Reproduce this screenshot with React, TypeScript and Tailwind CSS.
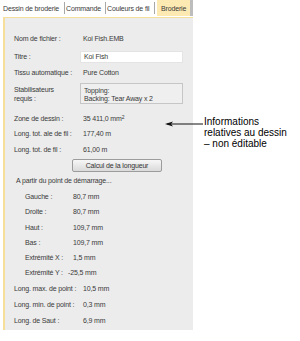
import React from "react";

const font = { fontFamily: '"Liberation Sans", Arial, sans-serif' };

function Row({
  label,
  value,
  indent = false,
  valueClass = "",
}: {
  label: string;
  value: React.ReactNode;
  indent?: boolean;
  valueClass?: string;
}) {
  return (
    <div className="flex h-[15px] items-center whitespace-nowrap">
      <div className={indent ? "w-[59px] shrink-0 pl-[11px]" : "w-[69px] shrink-0"}>{label}</div>
      <div className={valueClass}>{value}</div>
    </div>
  );
}

export default function App() {
  const tabs = [
    { t: "Dessin de broderie", w: "w-[63px]" },
    { t: "Commande", w: "w-[41px]" },
    { t: "Couleurs de fil", w: "w-[49px]" },
  ];
  return (
    <div
      className="relative h-[341px] w-[300px] bg-white text-[7px] leading-none tracking-[-0.15px] text-[#3a3a3a]"
      style={font}
    >
      <div className="flex">
        <div className="w-[193px] shrink-0">
          {/* tab strip */}
          <div className="flex h-[16px] items-stretch pl-[2px]">
            {tabs.map(({ t, w }) => (
              <div
                key={t}
                className={`${w} my-[2px] flex shrink-0 items-center overflow-hidden whitespace-nowrap border-r border-[#a8a8a8] pl-[1px]`}
              >
                {t}
              </div>
            ))}
            <div className="ml-[2px] flex w-[36px] shrink-0 items-center whitespace-nowrap border-r-[3px] border-[#bdbdbd] bg-[#fde9b2] pl-[4px]">
              Broderie
            </div>
          </div>

          {/* panel */}
          <div className="ml-[3px] mt-[1px] h-[313px] border-l-2 border-t border-[#f6df9a] bg-[#ececec] pl-[9px] pt-[13px]">
            <Row label="Nom de fichier :" value="Koi Fish.EMB" />
            <div className="mt-[4px] flex h-[13px] items-center">
              <div className="w-[66px] shrink-0">Titre :</div>
              <div className="flex h-[12px] w-[103px] items-center border border-[#e4e4e4] bg-white pl-[3px]">
                Koi Fish
              </div>
            </div>
            <div className="mt-[2px]">
              <Row label="Tissu automatique :" value="Pure Cotton" />
            </div>
            <div className="mt-[3px] flex">
              <div className="w-[66px] shrink-0 pt-[2px] leading-[9px]">
                Stabilisateurs
                <br />
                requis :
              </div>
              <div className="h-[21px] w-[103px] border border-[#c6c6c6] bg-[#efefef] pl-[3px] pt-[3px] leading-[8px]">
                Topping:
                <br />
                Backing: Tear Away x 2
              </div>
            </div>
            <div className="mt-[7px]">
              <Row
                label="Zone de dessin :"
                value={
                  <>
                    35 411,0 mm<sup className="text-[5px]">2</sup>
                  </>
                }
              />
              <Row label="Long. tot. ale de fil :" value="177,40 m" />
              <div className="mt-[1px]">
                <Row label="Long. tot. de fil :" value="61,00 m" />
              </div>
            </div>
            <div className="mt-[2px] pl-[58px]">
              <button
                type="button"
                className="flex h-[13px] w-[90px] items-center justify-center rounded-[2px] border border-[#9c9c9c] bg-gradient-to-b from-[#f7f7f7] to-[#dadada] text-[7px] text-[#333]"
              >
                Calcul de la longueur
              </button>
            </div>
            <div className="mt-[1px] flex h-[14px] items-center pl-[2px]">
              A partir du point de démarrage...
            </div>
            <div className="mt-[2px]">
              <Row indent label="Gauche :" value="80,7 mm" />
              <Row indent label="Droite :" value="80,7 mm" />
              <div className="mt-[1px]">
                <Row indent label="Haut :" value="109,7 mm" />
              </div>
              <Row indent label="Bas :" value="109,7 mm" />
              <Row indent label="Extrémité X :" value="1,5 mm" />
              <Row indent label="Extrémité Y :" value="-25,5 mm" valueClass="-ml-[5px]" />
            </div>
            <div className="mt-[1px] flex flex-col gap-[1px]">
              <Row label="Long. max. de point :" value="10,5 mm" />
              <Row label="Long. min. de point :" value="0,3 mm" />
              <Row label="Long. de Saut :" value="6,9 mm" />
            </div>
          </div>
        </div>

        {/* annotation */}
        <div className="ml-[11px] mt-[116px] text-[10px] leading-[11px] tracking-normal text-black">
          Informations
          <br />
          relatives au dessin
          <br />– non éditable
        </div>
      </div>

      {/* callout arrow */}
      <svg
        className="absolute left-[163px] top-[120px]"
        width="40"
        height="8"
        viewBox="0 0 40 8"
      >
        <line x1="4" y1="4" x2="40" y2="4" stroke="#111" strokeWidth="1" />
        <path d="M2 4 L10 1.5 L8 4 L10 6.5 Z" fill="#111" />
      </svg>
    </div>
  );
}
